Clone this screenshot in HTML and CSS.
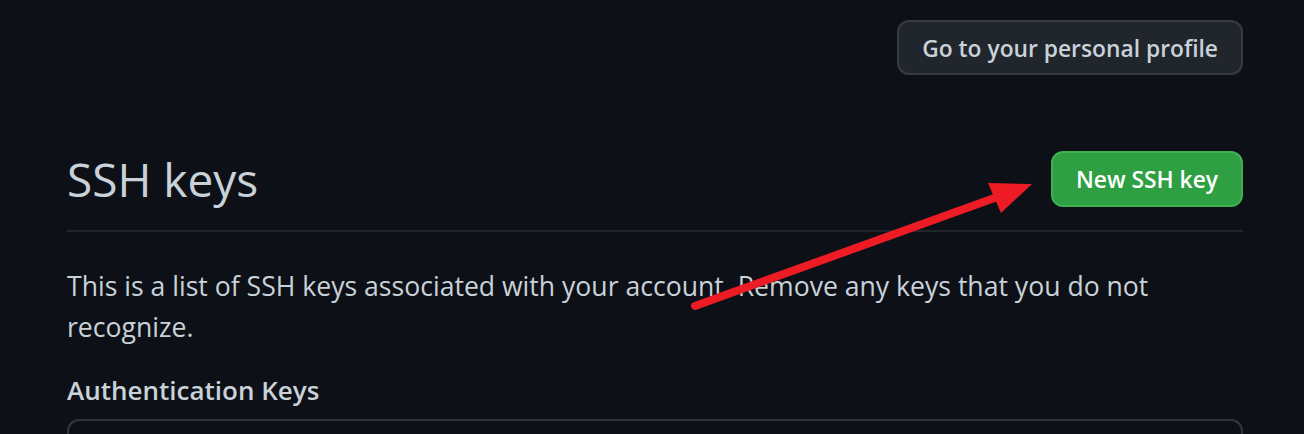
FILE: index.html
```html
<!DOCTYPE html>
<html lang="en">
<head>
<meta charset="utf-8">
<title>SSH keys</title>
<link rel="stylesheet" href="styles.css">
</head>
<body>
<div class="page">
  <div class="top-actions">
    <a class="btn">Go to your personal profile</a>
  </div>
  <div class="subhead">
    <h2 class="subhead-heading">SSH keys</h2>
    <a class="btn btn-primary">New SSH key</a>
  </div>
  <p class="intro">This is a list of SSH keys associated with your account. Remove any keys that you do not recognize.</p>
  <h3 class="section-title">Authentication Keys</h3>
  <div class="box"></div>
</div>
<svg class="annotation" width="1304" height="434" viewBox="0 0 1304 434">
  <line x1="695" y1="306" x2="1000" y2="196" stroke="#ed1c24" stroke-width="8" stroke-linecap="round"/>
  <polygon points="1032,184 988,183 1001,213" fill="#ed1c24"/>
</svg>
</body>
</html>
```

FILE: styles.css
```css
html, body {
  margin: 0;
  padding: 0;
  background: #0d1117;
  height: 100%;
  overflow: hidden;
}
body {
  position: relative;
  font-family: "Open Sans", "Noto Sans", sans-serif;
  color: #c9d1d9;
}
.page {
  padding: 20px 61px 0 67px;
}
.top-actions {
  display: flex;
  justify-content: flex-end;
}
.btn {
  display: inline-flex;
  align-items: center;
  justify-content: center;
  box-sizing: border-box;
  height: 55px;
  padding: 1px 23px 0;
  border: 2px solid #363b42;
  border-radius: 12px;
  background: #21262d;
  color: #c9d1d9;
  font-size: 22.8px;
  font-weight: 600;
  text-decoration: none;
  white-space: nowrap;
}
.btn-primary {
  height: 56px;
  background: #2ea043;
  border-color: #3fb151;
  color: #ffffff;
}
.subhead {
  display: flex;
  justify-content: space-between;
  align-items: center;
  margin-top: 76px;
  padding-bottom: 23px;
  border-bottom: 2px solid #21262d;
}
.subhead-heading {
  margin: 0;
  font-size: 46px;
  font-weight: 400;
  line-height: 56px;
  color: #c9d1d9;
}
.intro {
  margin: 34px 0 0;
  font-size: 26.6px;
  line-height: 41px;
}
.section-title {
  margin: 22px 0 0;
  font-size: 26px;
  font-weight: 600;
  line-height: 40px;
}
.box {
  margin-top: 9px;
  height: 60px;
  border: 2px solid #30363d;
  border-radius: 12px;
}
.annotation {
  position: absolute;
  left: 0;
  top: 0;
  pointer-events: none;
}
```
